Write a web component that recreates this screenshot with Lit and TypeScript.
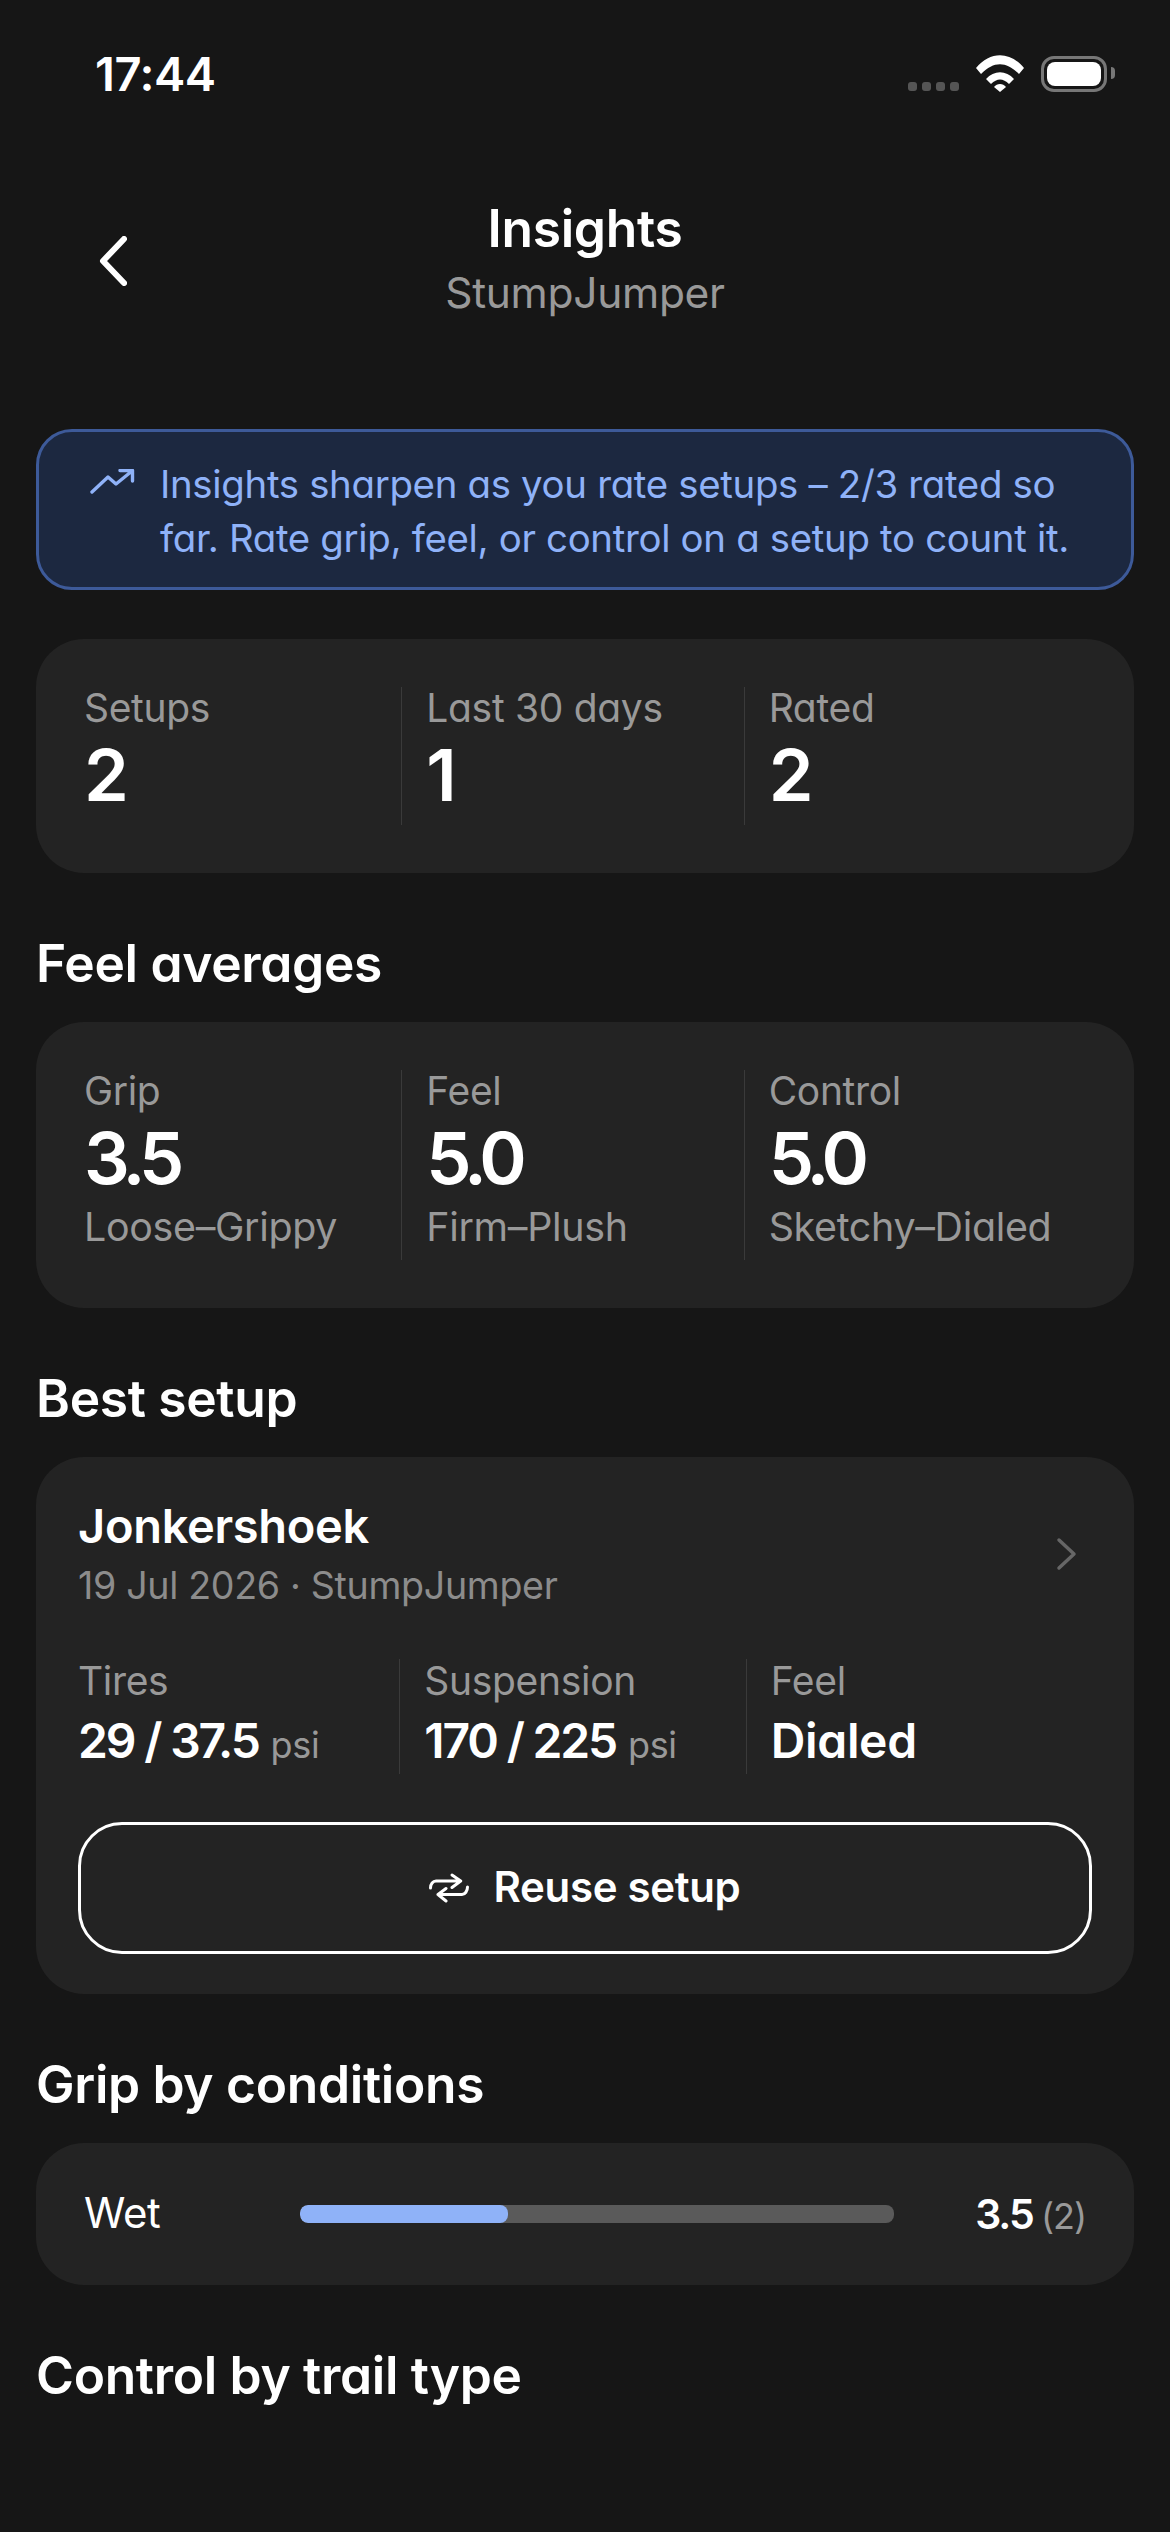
import { LitElement, html, css, svg } from 'lit';
import { customElement } from 'lit/decorators.js';

interface Metric {
  label: string;
  value: string;
  hint?: string;
}

const TOTALS: Metric[] = [
  { label: 'Setups', value: '2' },
  { label: 'Last 30 days', value: '1' },
  { label: 'Rated', value: '2' },
];

const AVERAGES: Metric[] = [
  { label: 'Grip', value: '3.5', hint: 'Loose–Grippy' },
  { label: 'Feel', value: '5.0', hint: 'Firm–Plush' },
  { label: 'Control', value: '5.0', hint: 'Sketchy–Dialed' },
];

const trendIcon = svg`<path d="M2 23 L18 8 L26 15 L42 2 M30 1.5 H42.5 V12" fill="none" stroke="currentColor" stroke-width="3.4" stroke-linecap="round" stroke-linejoin="round"/>`;

@customElement('app-root')
export class AppRoot extends LitElement {
  static styles = css`
    :host {
      display: block;
      height: 2532px;
      overflow: hidden;
      background: #161616;
      color: #fff;
      font-family: Inter, 'Noto Sans', sans-serif;
      font-feature-settings: 'cv11';
      letter-spacing: -0.02em;
    }

    /* status bar */
    .status {
      height: 120px;
      box-sizing: border-box;
      padding: 46px 63px 0 95px;
      display: flex;
      justify-content: space-between;
      align-items: flex-start;
    }
    .time {
      font-size: 47px;
      line-height: 56px;
      font-weight: 600;
      letter-spacing: -0.01em;
    }
    .status-icons {
      display: flex;
      align-items: flex-end;
      height: 38px;
      margin-top: 8px;
    }
    .signal {
      display: flex;
      gap: 5px;
      margin-right: 17px;
      margin-bottom: 1px;
    }
    .signal i {
      width: 9px;
      height: 9px;
      border-radius: 3px;
      background: #555;
    }
    .wifi {
      width: 48px;
      height: 37px;
      margin-right: 17px;
    }
    .battery {
      width: 66px;
      height: 36px;
      box-sizing: border-box;
      border: 3px solid #777;
      border-radius: 13px;
      padding: 3px;
      position: relative;
    }
    .battery b {
      display: block;
      height: 100%;
      border-radius: 8px;
      background: #fff;
    }
    .battery::after {
      content: '';
      position: absolute;
      right: -11px;
      top: 8px;
      width: 4px;
      height: 12px;
      border-radius: 0 4px 4px 0;
      background: #777;
    }

    /* header */
    .header {
      height: 200px;
      display: grid;
      grid-template-columns: 96px 1fr 96px;
    }
    .back {
      padding: 116px 0 0 99px;
    }
    .back svg {
      display: block;
      width: 28px;
      height: 50px;
    }
    .titles {
      grid-column: 2;
      text-align: center;
      padding-top: 78px;
    }
    .title {
      font-size: 51.5px;
      line-height: 60px;
      font-weight: 600;
    }
    .subtitle {
      font-size: 42.5px;
      line-height: 52px;
      margin-top: 9px;
      color: #999;
    }

    main {
      padding: 0 36px;
      margin-top: 109px;
    }

    /* banner */
    .banner {
      height: 161px;
      box-sizing: border-box;
      border: 3px solid #3d5a99;
      border-radius: 36px;
      background: #1c2840;
      color: #8fb2f8;
      display: flex;
      padding: 25px 0 0 51px;
      font-size: 38.4px;
      line-height: 54px;
    }
    .banner svg {
      width: 45px;
      height: 26px;
      margin-top: 12px;
      margin-right: 25px;
      flex: none;
    }

    .card {
      background: #232323;
      border-radius: 48px;
    }
    .totals {
      margin-top: 49px;
    }
    .metrics {
      display: flex;
      padding: 48px;
    }
    .metric {
      flex: 1 1 0;
      padding-bottom: 7px;
    }
    .metric + .metric {
      border-left: 1px solid #3a3a3a;
      padding-left: 24px;
    }
    .metric .label {
      font-size: 39px;
      line-height: 48px;
      margin-top: -3px;
      color: #999;
    }
    .metric .value {
      font-size: 72px;
      line-height: 86px;
      font-weight: 600;
      letter-spacing: -0.08em;
    }
    .metric .hint {
      font-size: 39.4px;
      line-height: 52px;
      color: #999;
    }

    h2 {
      margin: 60px 0 29px;
      font-size: 51.5px;
      line-height: 60px;
      font-weight: 600;
    }

    /* best setup */
    .best {
      height: 537px;
      box-sizing: border-box;
      padding: 39px 42px 42px;
    }
    .best-head {
      display: flex;
      justify-content: space-between;
      align-items: center;
    }
    .best-name {
      font-size: 47px;
      line-height: 60px;
      font-weight: 600;
    }
    .best-meta {
      font-size: 37.6px;
      line-height: 50px;
      color: #8c8c8c;
      margin-top: 5px;
    }
    .best-head svg {
      width: 22px;
      height: 34px;
      margin-right: 14px;
    }
    .readings {
      display: flex;
      margin-top: 48px;
    }
    .reading {
      flex: 1 1 0;
      height: 115px;
    }
    .reading + .reading {
      border-left: 1px solid #3a3a3a;
      padding-left: 24px;
    }
    .reading .label {
      font-size: 39px;
      line-height: 50px;
      margin-top: -3px;
      color: #999;
    }
    .reading .value {
      font-size: 48px;
      line-height: 60px;
      font-weight: 600;
      margin-top: 5px;
    }
    .reading .value .num {
      letter-spacing: -0.045em;
    }
    .reading .value small {
      font-size: 36px;
      font-weight: 400;
      color: #999;
    }
    .reuse {
      margin-top: 48px;
      height: 132px;
      box-sizing: border-box;
      border: 3px solid #fff;
      border-radius: 44px;
      padding-bottom: 4px;
      display: flex;
      align-items: center;
      justify-content: center;
      gap: 24px;
      font-size: 42px;
      font-weight: 600;
    }
    .reuse svg {
      width: 40px;
      height: 30px;
      margin-top: 4px;
    }

    /* condition rows */
    .condition {
      height: 142px;
      box-sizing: border-box;
      padding: 0 48px;
      display: flex;
      align-items: center;
    }
    .condition .name {
      width: 216px;
      font-size: 42px;
      margin-top: -3px;
    }
    .track {
      width: 594px;
      height: 18px;
      border-radius: 8px;
      background: #5a5a5a;
      overflow: hidden;
    }
    .fill {
      height: 100%;
      border-radius: 8px;
      background: #8fb2f8;
    }
    .score {
      flex: 1;
      text-align: right;
      font-size: 41px;
      font-weight: 600;
      letter-spacing: -0.05em;
    }
    .score small {
      font-size: 36px;
      font-weight: 400;
      letter-spacing: -0.03em;
      color: #999;
    }
  `;

  private renderMetrics(items: Metric[]) {
    return html`
      <div class="metrics">
        ${items.map(
          (item) => html`
            <div class="metric">
              <div class="label">${item.label}</div>
              <div class="value">${item.value}</div>
              ${item.hint ? html`<div class="hint">${item.hint}</div>` : ''}
            </div>
          `
        )}
      </div>
    `;
  }

  render() {
    return html`
      <div class="status">
        <div class="time">17:44</div>
        <div class="status-icons">
          <div class="signal"><i></i><i></i><i></i><i></i></div>
          <svg class="wifi" viewBox="0 0 48 37">
            <path d="M0 13 C14 -4 34 -4 48 13 L43 19 C30 6 18 6 5 19 Z" fill="#fff" />
            <path d="M10 24 C18 15 30 15 38 24 L33 29 C27 23 21 23 15 29 Z" fill="#fff" />
            <path d="M18 32 C21 28 27 28 30 32 L24 37 Z" fill="#fff" />
          </svg>
          <div class="battery"><b></b></div>
        </div>
      </div>

      <div class="header">
        <div class="back">
          <svg viewBox="0 0 28 50">
            <path d="M25 3 L4 25 L25 47" fill="none" stroke="#fff" stroke-width="6" stroke-linecap="round" stroke-linejoin="round" />
          </svg>
        </div>
        <div class="titles">
          <div class="title">Insights</div>
          <div class="subtitle">StumpJumper</div>
        </div>
      </div>

      <main>
        <div class="banner">
          <svg viewBox="0 0 45 26">${trendIcon}</svg>
          <div>Insights sharpen as you rate setups – 2/3 rated so<br />far. Rate grip, feel, or control on a setup to count it.</div>
        </div>

        <div class="card totals">${this.renderMetrics(TOTALS)}</div>

        <h2>Feel averages</h2>
        <div class="card">${this.renderMetrics(AVERAGES)}</div>

        <h2>Best setup</h2>
        <div class="card best">
          <div class="best-head">
            <div>
              <div class="best-name">Jonkershoek</div>
              <div class="best-meta">19 Jul 2026 · StumpJumper</div>
            </div>
            <svg viewBox="0 0 22 34">
              <path d="M3 3 L18 17 L3 31" fill="none" stroke="#666" stroke-width="3.5" stroke-linecap="round" stroke-linejoin="round" />
            </svg>
          </div>
          <div class="readings">
            <div class="reading">
              <div class="label">Tires</div>
              <div class="value"><span class="num">29 / 37.5</span> <small>psi</small></div>
            </div>
            <div class="reading">
              <div class="label">Suspension</div>
              <div class="value"><span class="num">170 / 225</span> <small>psi</small></div>
            </div>
            <div class="reading">
              <div class="label">Feel</div>
              <div class="value">Dialed</div>
            </div>
          </div>
          <div class="reuse">
            <svg viewBox="0 0 40 30">
              <path d="M23 2 L31.7 8 L23 14.5 M31.7 8 H7 C4 8 1.5 11 1.5 15 M17 15.5 L9 21.5 L17 28 M9 21.5 H33 C36 21.5 38.5 18 38.5 14" fill="none" stroke="#fff" stroke-width="3" stroke-linecap="round" stroke-linejoin="round" />
            </svg>
            <span>Reuse setup</span>
          </div>
        </div>

        <h2>Grip by conditions</h2>
        <div class="card condition">
          <div class="name">Wet</div>
          <div class="track"><div class="fill" style="width: 35%"></div></div>
          <div class="score">3.5 <small>(2)</small></div>
        </div>

        <h2>Control by trail type</h2>
      </main>
    `;
  }
}

declare global {
  interface HTMLElementTagNameMap {
    'app-root': AppRoot;
  }
}
